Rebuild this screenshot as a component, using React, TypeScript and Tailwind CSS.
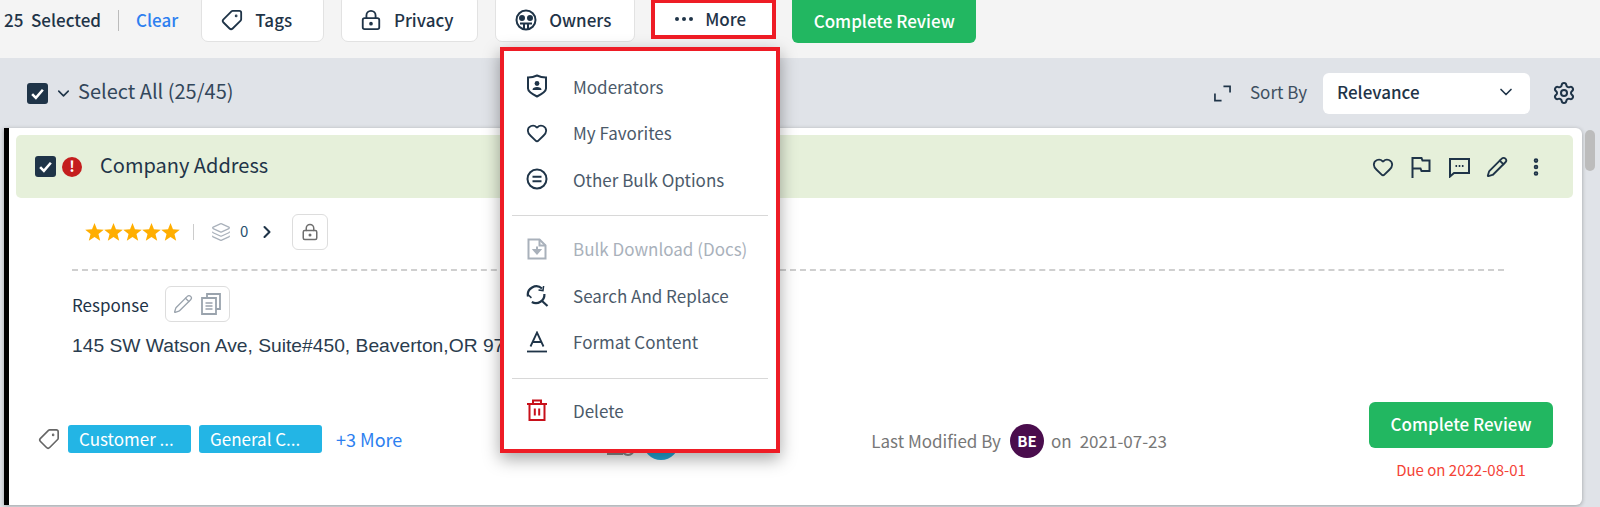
import { ChevronDown, ChevronRight, Heart, Layers, LockKeyhole, MoreVertical, Pencil, Settings, Tag } from 'lucide-react';
import type { ReactNode } from 'react';

const ink = '#1f3448';

const CheckBox = () => (
  <span className="flex h-[21px] w-[21px] items-center justify-center rounded-[3px] bg-[#1f3448]">
    <svg width="15" height="15" viewBox="0 0 14 14" fill="none" stroke="#fff" strokeWidth="2.4">
      <path d="M2 7.5l3.5 3.5L12 3.5" />
    </svg>
  </span>
);

const ToolButton = ({ icon, label, className }: { icon: ReactNode; label: string; className: string }) => (
  <button className={`-mt-[6px] flex h-[48px] items-center justify-center gap-[12px] rounded-[7px] border border-[#e2e2e2] bg-white pt-[4px] text-[17px] font-medium text-[#1f3448] ${className}`}>
    {icon}
    {label}
  </button>
);

const OwnersIcon = () => (
  <svg width="22" height="22" viewBox="0 0 22 22" fill="none" stroke={ink} strokeWidth="2">
    <circle cx="11" cy="11" r="9.5" />
    <circle cx="7" cy="9" r="2" fill={ink} />
    <circle cx="15" cy="9" r="2" fill={ink} />
    <path d="M5 14.5h12M9 14.5v6M13 14.5v6" />
  </svg>
);

const MenuRow = ({ icon, label, muted }: { icon: ReactNode; label: string; muted?: boolean }) => (
  <div className="flex h-[46.5px] items-center">
    <span className="flex w-[66px] justify-center">{icon}</span>
    <span className={`ml-[3px] text-[17px] ${muted ? 'text-[#a9b1bb]' : 'text-[#4b5a6a]'}`}>{label}</span>
  </div>
);

const ShieldIcon = () => (
  <svg width="22" height="24" viewBox="0 0 22 24" fill="none" stroke={ink} strokeWidth="2">
    <path d="M2 3.5C6 3.5 8 3 11 1.5c3 1.5 5 2 9 2v11c0 3-5 6-9 8-4-2-9-5-9-8z" />
    <circle cx="11" cy="9.5" r="2.4" fill={ink} stroke="none" />
    <path d="M6.5 16c0-2.2 2-3 4.5-3s4.5.8 4.5 3z" fill={ink} stroke="none" />
  </svg>
);

const EqualCircleIcon = () => (
  <svg width="22" height="22" viewBox="0 0 22 22" fill="none" stroke={ink} strokeWidth="2">
    <circle cx="11" cy="11" r="9.5" />
    <path d="M6.5 8.7h9M6.5 13.3h9" />
  </svg>
);

const DocDownloadIcon = () => (
  <svg width="20" height="22" viewBox="0 0 20 22" fill="none" stroke="#a9b1bb" strokeWidth="2">
    <path d="M1.5 1.5h11l6 6v13h-17z" />
    <path d="M12.5 1.5v6h6" />
    <path d="M10 8.5v6" />
    <path d="M7 12l3 3.5 3-3.5z" fill="#a9b1bb" />
  </svg>
);

const SearchReplaceIcon = () => (
  <svg width="23" height="23" viewBox="0 0 23 23" fill="none" stroke={ink} strokeWidth="2.2">
    <path d="M2 12.5A8.5 8.5 0 0 1 16 4.5" />
    <path d="M18.4 10a8.5 8.5 0 0 1-12.6 8" />
    <path d="M15.5 16.5l6 5.5" />
    <path d="M12.5 6l4.5.6L17.6 2" strokeWidth="1.5" />
    <path d="M2 10.5l3.4 3.4" strokeWidth="1.5" />
  </svg>
);

const FormatIcon = () => (
  <svg width="20" height="22" viewBox="0 0 20 22" fill="none" stroke={ink} strokeWidth="1.8">
    <path d="M3.5 15.5L10 1.5l6.5 14M5.5 11h9" />
    <path d="M0 20.5h20" />
  </svg>
);

const TrashIcon = () => (
  <svg width="20" height="22" viewBox="0 0 20 22" fill="none" stroke="#c8101a" strokeWidth="2">
    <path d="M0 5h20M6 5V1.5h8V5M2.5 5v16h15V5M7.8 9.5v7M12.2 9.5v7" />
  </svg>
);

const FlagIcon = () => (
  <svg width="22" height="22" viewBox="0 0 22 22" fill="none" stroke={ink} strokeWidth="2">
    <path d="M2.5 22V2h9l1 2.5h7V15h-8l-1-2.5h-8" />
  </svg>
);

const CommentIcon = () => (
  <svg width="22" height="22" viewBox="0 0 22 22" fill="none" stroke={ink} strokeWidth="2">
    <path d="M2 3h19v14H6l-4 3.5z" />
    <path d="M7.5 10h1.6M10.7 10h1.6M13.9 10h1.6" />
  </svg>
);

const ExpandIcon = () => (
  <svg width="17" height="17" viewBox="0 0 18 18" fill="none" stroke={ink} strokeWidth="1.8">
    <path d="M1 9v7.5h7M10 1.5h7V8" />
  </svg>
);

const CopyDocsIcon = () => (
  <svg width="20" height="22" viewBox="0 0 20 22" fill="none" stroke="#9aa3ad" strokeWidth="1.8">
    <path d="M6 4.5V1h13v15h-4" />
    <path d="M1 5h14v16H1z" />
    <path d="M4.5 10h7M4.5 13h7M4.5 16h7" strokeWidth="1.4" />
  </svg>
);

const StarIcon = () => (
  <svg width="19" height="18" viewBox="0 0 20 19" fill="#ffae00">
    <path d="M10 0l2.6 6.6 7.2.5-5.6 4.6 1.8 7L10 14.9l-6 3.8 1.8-7L.2 7.1l7.2-.5z" />
  </svg>
);

const Chip = ({ label }: { label: string }) => (
  <span className="flex h-[28px] w-[123px] items-center rounded-[3px] bg-[#23b5e5] pb-[1px] pl-[11px] text-[17px] text-white">{label}</span>
);

export default function App() {
  return (
    <div className="relative h-[507px] w-[1600px] overflow-hidden bg-[#e0e3e8] font-['Noto_Sans_CJK_SC','Noto_Sans',sans-serif] text-[#1f3448]">
      {/* bulk action bar */}
      <div className="flex h-[58px] items-start bg-[#f4f4f4] pl-[4px]">
        <div className="flex h-[41px] items-center pb-[1px]">
          <span className="text-[17px] font-medium">25&nbsp; Selected</span>
          <span className="ml-[17px] h-[21px] w-px bg-[#bbbbbb]" />
          <span className="ml-[17px] text-[17px] font-medium text-[#2d7ff0]">Clear</span>
        </div>
        <ToolButton className="ml-[23px] w-[123px] pr-[12px]" icon={<Tag size={22} strokeWidth={2} className="rotate-90" />} label="Tags" />
        <ToolButton className="ml-[17px] w-[137px] pr-[6px]" icon={<LockKeyhole size={22} strokeWidth={2} />} label="Privacy" />
        <ToolButton className="ml-[17px] w-[140px] pr-[4px]" icon={<OwnersIcon />} label="Owners" />
        <button className="z-10 -mt-px ml-[16px] flex h-[40px] w-[125px] items-center justify-center gap-[12px] border-[4px] border-[#ee1c25] bg-white pr-[6px] text-[17px] font-medium">
          <span className="flex gap-[3px]">
            <i className="h-[4px] w-[4px] rounded-full bg-[#1f3448]" />
            <i className="h-[4px] w-[4px] rounded-full bg-[#1f3448]" />
            <i className="h-[4px] w-[4px] rounded-full bg-[#1f3448]" />
          </span>
          More
        </button>
        <button className="-mt-[6px] ml-[16px] h-[49px] w-[184px] rounded-[6px] bg-[#22b761] pt-[4px] text-[17px] font-medium text-white">Complete Review</button>
      </div>

      {/* select all and sort */}
      <div className="flex h-[70px] items-center pl-[27px] pr-[24px]">
        <CheckBox />
        <ChevronDown size={19} strokeWidth={2} className="ml-[6px]" />
        <span className="ml-[5px] pb-[4px] text-[20px] text-[#33475b]">Select All (25/45)</span>
        <span className="ml-auto"><ExpandIcon /></span>
        <span className="ml-[19px] pb-[2px] text-[17px] text-[#3e4f60]">Sort By</span>
        <div className="ml-[16px] flex h-[41px] w-[207px] items-center justify-between rounded-[6px] bg-white pb-[2px] pl-[14px] pr-[14px] text-[17px] font-medium">
          Relevance
          <ChevronDown size={20} strokeWidth={2} />
        </div>
        <Settings size={24} strokeWidth={2} className="ml-[22px]" />
      </div>

      {/* scrollbar */}
      <div className="absolute right-[5px] top-[130px] h-[41px] w-[10px] rounded-full bg-[#bcbcbc]" />

      {/* question card */}
      <div className="ml-[4px] h-[377px] w-[1578px] rounded-r-[6px] border-l-[5px] border-black bg-white pl-[7px] pr-[9px] pt-[7px] shadow-[0_1px_4px_rgba(0,0,0,0.3)]">
        <div className="flex h-[63px] items-center rounded-[5px] bg-[#e6f0da] pl-[19px] pr-[26px]">
          <CheckBox />
          <span className="ml-[6px] flex h-[20px] w-[20px] items-center justify-center rounded-full bg-[#c41e1e] text-[15px] font-bold text-white">!</span>
          <span className="ml-[18px] pb-[3px] text-[20px] text-[#1f3448]">Company Address</span>
          <div className="ml-auto flex items-center gap-[16px]">
            <Heart size={22} strokeWidth={2} />
            <FlagIcon />
            <CommentIcon />
            <Pencil size={22} strokeWidth={2} />
            <MoreVertical size={22} strokeWidth={3} className="ml-[1px]" />
          </div>
        </div>

        <div className="ml-[69px] mt-[16px] flex h-[36px] items-center">
          <span className="flex w-[97px]">
            <StarIcon />
            <StarIcon />
            <StarIcon />
            <StarIcon />
            <StarIcon />
          </span>
          <span className="ml-[11px] h-[16px] w-px bg-[#cccccc]" />
          <Layers size={20} strokeWidth={1.5} className="ml-[17px] text-[#a9b1bb]" />
          <span className="ml-[9px] pb-[1px] text-[15px] text-[#28506e]">0</span>
          <ChevronRight size={20} strokeWidth={2.5} className="ml-[9px]" />
          <span className="ml-[15px] flex h-[36px] w-[36px] items-center justify-center rounded-[6px] border border-[#dddddd]">
            <LockKeyhole size={18} strokeWidth={2} className="text-[#6f6f6f]" />
          </span>
        </div>

        <div className="ml-[56px] mt-[19px] w-[1432px] border-t-2 border-dashed border-[#cfcfcf]" />

        <div className="ml-[56px] mt-[15px] flex h-[36px] items-center">
          <span className="pt-[2px] text-[17px]">Response</span>
          <span className="ml-[16px] flex h-[36px] w-[65px] items-center justify-center gap-[8px] rounded-[6px] border border-[#dddddd]">
            <Pencil size={20} strokeWidth={1.6} className="text-[#9aa3ad]" />
            <CopyDocsIcon />
          </span>
        </div>

        <p className="ml-[56px] mt-[13px] font-['Liberation_Sans',sans-serif] text-[19.25px] leading-[22px] text-[#2a3c4e]">145 SW Watson Ave, Suite#450, Beaverton,OR 97006</p>

        <div className="mt-[45px] flex items-start">
          <div className="ml-[22px] mt-[23px] flex items-center">
            <Tag size={22} strokeWidth={1.8} className="rotate-90 text-[#666666]" />
            <span className="ml-[8px] flex gap-[8px]">
              <Chip label="Customer ..." />
              <Chip label="General C..." />
            </span>
            <span className="ml-[14px] text-[18px] text-[#2d7ff0]">+3 More</span>
          </div>
          <div className="ml-[469px] mt-[22px] flex h-[34px] items-center text-[17px] text-[#777777]">
            Last Modified By
            <span className="ml-[9px] flex h-[34px] w-[34px] items-center justify-center rounded-full bg-[#4a0d4d] text-[15px] font-bold text-white">BE</span>
            <span className="ml-[7px]">on</span>
            <span className="ml-[8px]">2021-07-23</span>
          </div>
          <div className="ml-auto mr-[20px] flex w-[184px] flex-col items-center">
            <button className="h-[46px] w-full rounded-[6px] bg-[#22b761] pb-[2px] text-[17px] font-medium text-white">Complete Review</button>
            <span className="mt-[11px] text-[15px] text-[#f44336]">Due on 2022-08-01</span>
          </div>
        </div>
      </div>

      {/* hidden behind the open menu, only the edges show */}
      <svg className="absolute left-[607px] top-[440px]" width="30" height="20" viewBox="0 0 30 20" fill="none" stroke="#8a8a8a" strokeWidth="2">
        <path d="M0 14h16" />
        <circle cx="21" cy="9" r="6" />
      </svg>
      <span className="absolute left-[643px] top-[424px] h-[36px] w-[36px] rounded-full bg-[#23a6d5]" />

      {/* open More menu */}
      <div className="absolute left-[500px] top-[47px] h-[406px] w-[280px] border-[4px] border-[#ee1c25] bg-white pt-[12px] shadow-[0_6px_16px_rgba(0,0,0,0.35)]">
        <MenuRow icon={<ShieldIcon />} label="Moderators" />
        <MenuRow icon={<Heart size={22} strokeWidth={2} color={ink} />} label="My Favorites" />
        <MenuRow icon={<EqualCircleIcon />} label="Other Bulk Options" />
        <div className="mx-[8px] mb-[10px] mt-[12px] h-px bg-[#d8d8d8]" />
        <MenuRow icon={<DocDownloadIcon />} label="Bulk Download (Docs)" muted />
        <MenuRow icon={<SearchReplaceIcon />} label="Search And Replace" />
        <MenuRow icon={<FormatIcon />} label="Format Content" />
        <div className="mx-[8px] mb-[8px] mt-[13px] h-px bg-[#d8d8d8]" />
        <MenuRow icon={<TrashIcon />} label="Delete" />
      </div>
    </div>
  );
}
